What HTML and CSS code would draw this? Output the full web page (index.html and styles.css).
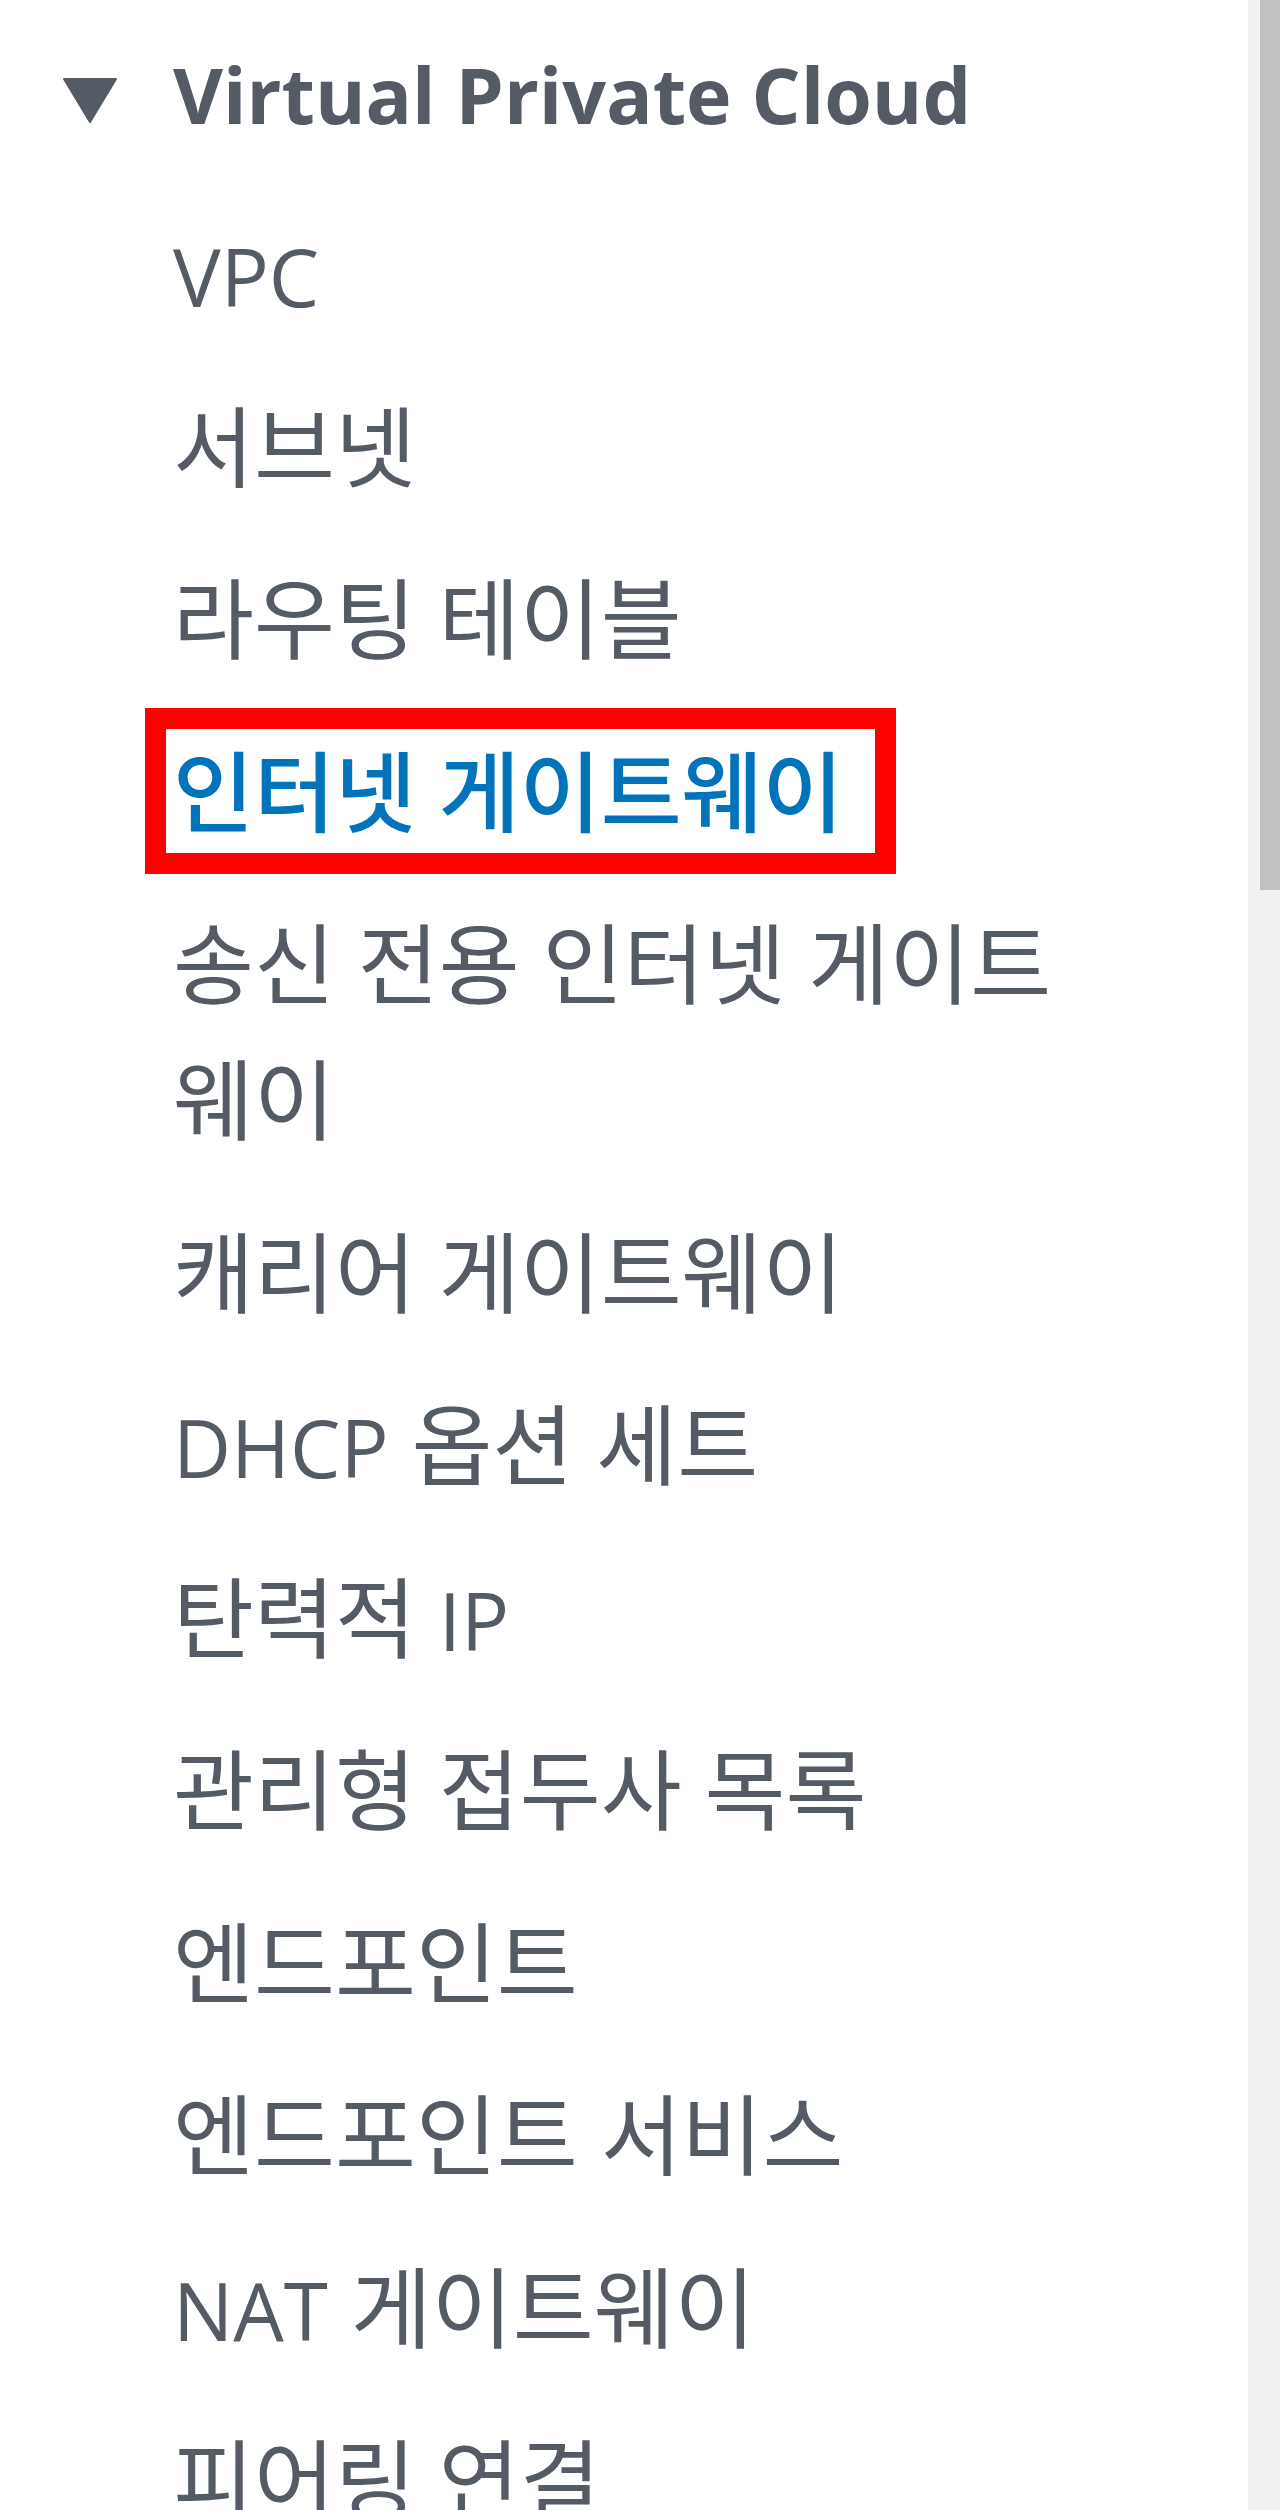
FILE: index.html
```html
<!DOCTYPE html>
<html lang="ko">
<head>
<meta charset="utf-8">
<title>VPC navigation</title>
<link rel="stylesheet" href="styles.css">
</head>
<body>
<div class="page">
  <nav class="sidenav">
    <div class="section-head">
      <svg class="caret" width="56" height="45" viewBox="0 0 56 45" aria-hidden="true">
        <polygon points="2,1 54,1 28,44" fill="#545b64" stroke="#545b64" stroke-width="2" stroke-linejoin="round"/>
      </svg>
      <span class="section-title">Virtual Private Cloud</span>
    </div>
    <ul class="nav-list">
      <li class="nav-item"><span class="lat">VPC</span></li>
      <li class="nav-item">서브넷</li>
      <li class="nav-item">라우팅 테이블</li>
      <li class="nav-item"><span class="active">인터넷 게이트웨이</span></li>
      <li class="nav-item">송신 전용 인터넷 게이트웨이</li>
      <li class="nav-item">캐리어 게이트웨이</li>
      <li class="nav-item"><span class="lat">DHCP</span> 옵션 세트</li>
      <li class="nav-item">탄력적 <span class="lat">IP</span></li>
      <li class="nav-item">관리형 접두사 목록</li>
      <li class="nav-item">엔드포인트</li>
      <li class="nav-item">엔드포인트 서비스</li>
      <li class="nav-item"><span class="lat">NAT</span> 게이트웨이</li>
      <li class="nav-item">피어링 연결</li>
    </ul>
  </nav>
  <div class="scrollbar">
    <div class="thumb"></div>
  </div>
</div>
</body>
</html>
```

FILE: styles.css
```css
html, body {
  margin: 0;
  padding: 0;
  background: #ffffff;
}

body {
  height: 2510px;
  overflow: hidden;
  font-family: "Open Sans", "Noto Sans CJK KR", sans-serif;
  font-size: 80px;
  color: #545b64;
}

.page {
  display: flex;
  height: 2510px;
}

.sidenav {
  flex: 1;
  padding: 27px 0 0 62px;
}

.section-head {
  display: flex;
  align-items: flex-start;
  line-height: 136px;
}

.caret {
  flex: none;
  margin-top: 51px;
  margin-right: 55px;
}

.section-title {
  font-size: 77px;
  font-weight: 700;
  color: #545b64;
  white-space: nowrap;
}

.nav-list {
  list-style: none;
  margin: 24px 0 0 0;
  padding: 0 163px 0 111px;
}

.nav-item {
  font-size: 88px;
  line-height: 136px;
  padding: 18px 0 18.5px;
}

.lat {
  font-size: 80px;
  line-height: 100px;
}

.active {
  display: inline-block;
  line-height: 124px;
  margin: -15px 0 -15px -28px;
  padding: 0 31px 0 7px;
  border: 21px solid #ff0000;
  color: #0073bb;
  font-weight: 500;
}

.scrollbar {
  flex: none;
  width: 32px;
  background: #f1f1f1;
  display: flex;
  justify-content: flex-end;
}

.thumb {
  width: 20px;
  height: 890px;
  background: #c1c1c1;
}
```
